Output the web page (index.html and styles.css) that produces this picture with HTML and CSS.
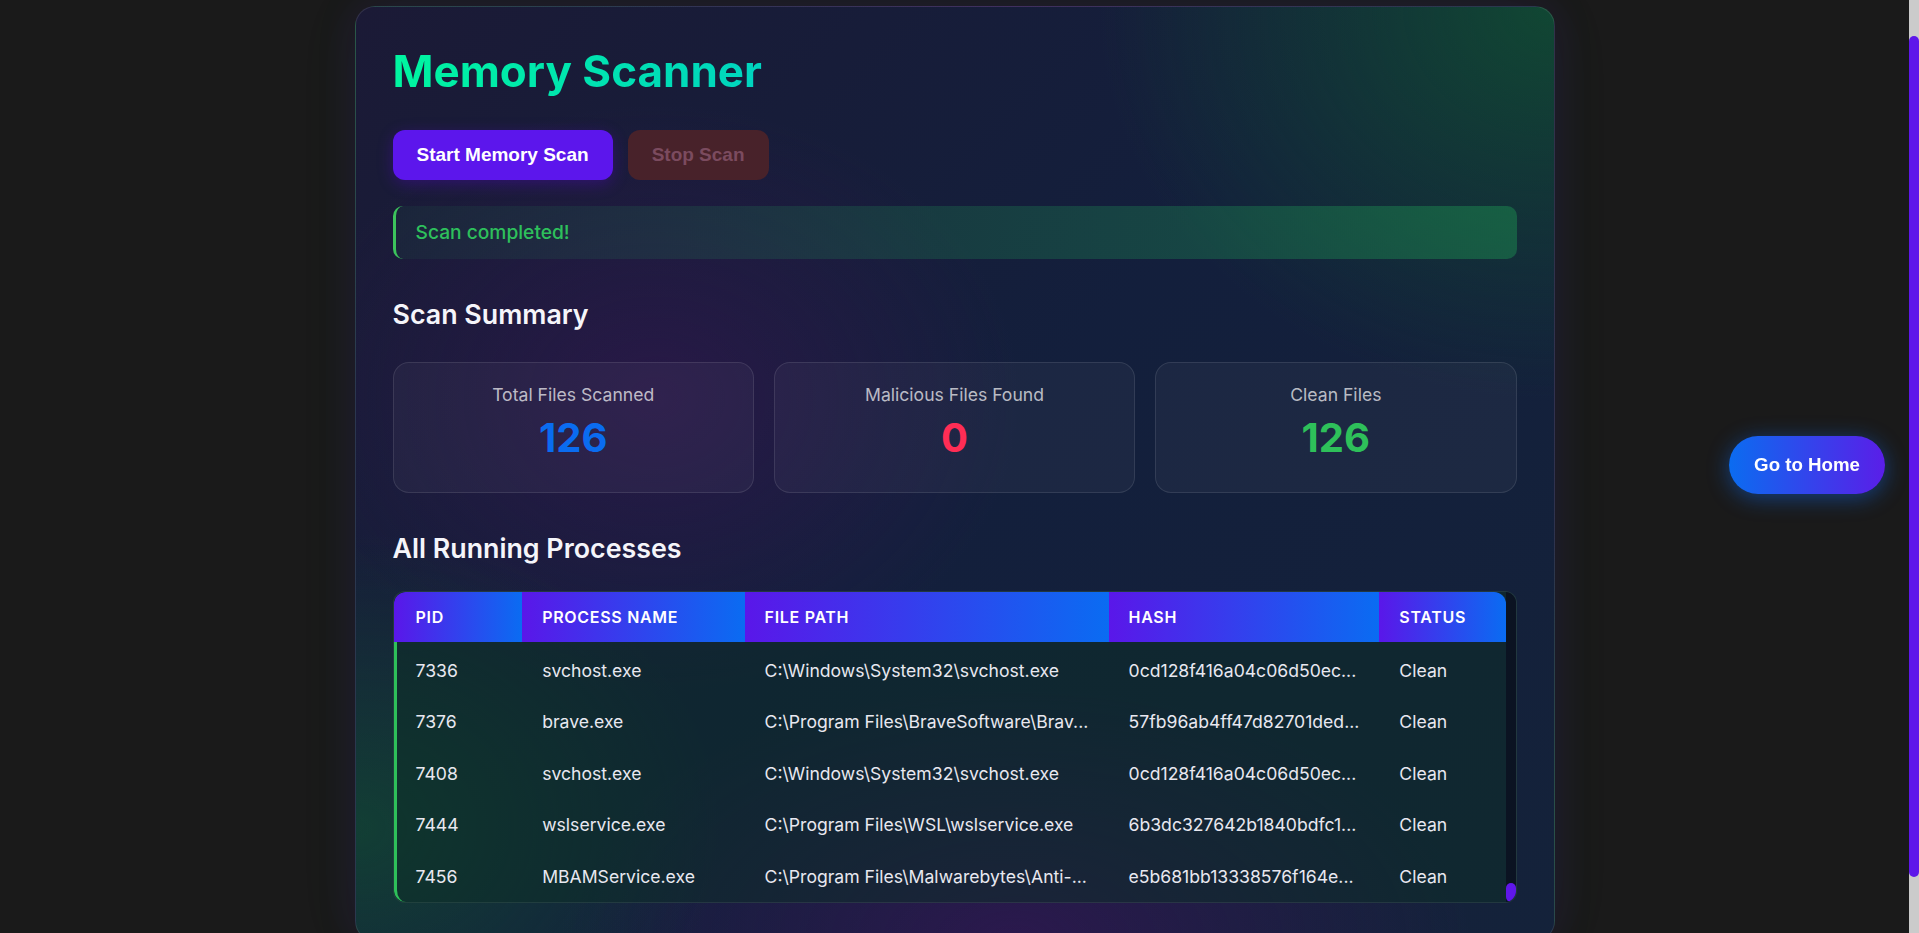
FILE: index.html
```html
<!DOCTYPE html>
<html lang="en">
<head>
<meta charset="utf-8">
<title>Memory Scanner</title>
<link rel="stylesheet" href="styles.css">
</head>
<body>
<main class="page">
  <section class="scanner">
    <h1 class="title">Memory Scanner</h1>
    <div class="actions">
      <button class="btn btn-start" type="button">Start Memory Scan</button>
      <button class="btn btn-stop" type="button" disabled>Stop Scan</button>
    </div>
    <div class="alert">Scan completed!</div>

    <h2 class="section-title">Scan Summary</h2>
    <div class="stats">
      <div class="stat">
        <div class="stat-label">Total Files Scanned</div>
        <div class="stat-value total">126</div>
      </div>
      <div class="stat">
        <div class="stat-label">Malicious Files Found</div>
        <div class="stat-value bad">0</div>
      </div>
      <div class="stat">
        <div class="stat-label">Clean Files</div>
        <div class="stat-value good">126</div>
      </div>
    </div>

    <h2 class="section-title">All Running Processes</h2>
    <div class="table-wrap">
      <table class="proc-table">
        <colgroup>
          <col class="c-pid">
          <col class="c-name">
          <col class="c-path">
          <col class="c-hash">
          <col class="c-status">
        </colgroup>
        <thead>
          <tr><th>PID</th><th>Process Name</th><th>File Path</th><th>Hash</th><th>Status</th></tr>
        </thead>
        <tbody>
          <tr><td>7336</td><td>svchost.exe</td><td>C:\Windows\System32\svchost.exe</td><td>0cd128f416a04c06d50ec...</td><td>Clean</td></tr>
          <tr><td>7376</td><td>brave.exe</td><td>C:\Program Files\BraveSoftware\Brav...</td><td>57fb96ab4ff47d82701ded...</td><td>Clean</td></tr>
          <tr><td>7408</td><td>svchost.exe</td><td>C:\Windows\System32\svchost.exe</td><td>0cd128f416a04c06d50ec...</td><td>Clean</td></tr>
          <tr><td>7444</td><td>wslservice.exe</td><td>C:\Program Files\WSL\wslservice.exe</td><td>6b3dc327642b1840bdfc1...</td><td>Clean</td></tr>
          <tr><td>7456</td><td>MBAMService.exe</td><td>C:\Program Files\Malwarebytes\Anti-...</td><td>e5b681bb13338576f164e...</td><td>Clean</td></tr>
        </tbody>
      </table>
      <div class="vscroll"><div class="vthumb"></div></div>
    </div>
  </section>
</main>
<button class="home-btn" type="button">Go to Home</button>
<div class="page-scrollbar"><div class="page-scrollbar-thumb"></div></div>
</body>
</html>
```

FILE: styles.css
```css
* { box-sizing: border-box; }

html { background: #1a1a1a; }

body {
  margin: 0;
  padding-right: 10px;
  background: #1a1a1a;
  color: #f2f2f7;
  font-family: Inter, "Noto Sans", sans-serif;
}

.page { padding: 6px 0 53px; }

.scanner {
  width: 1200px;
  margin: 0 auto;
  padding: 37px;
  border: 1px solid rgba(255, 255, 255, 0.1);
  border-radius: 20px;
  background:
    radial-gradient(ellipse 650px 560px at 100% 0%, rgba(16, 84, 48, 0.75), transparent 70%),
    radial-gradient(ellipse 520px 420px at 0% 88%, rgba(16, 84, 48, 0.6), transparent 70%),
    radial-gradient(ellipse 520px 420px at 25% 42%, rgba(58, 20, 84, 0.5), transparent 70%),
    radial-gradient(ellipse 650px 360px at 55% 100%, rgba(62, 18, 92, 0.55), transparent 70%),
    linear-gradient(135deg, #1b1a36 0%, #131f3c 50%, #14223a 100%);
  box-shadow: 0 0 40px rgba(98, 0, 234, 0.12), 0 0 70px rgba(0, 200, 100, 0.05);
}

.title {
  margin: 0 0 31px;
  font-size: 44px;
  line-height: 55.2px;
  font-weight: 700;
  background: linear-gradient(90deg, #00f5a0, #0090ff);
  -webkit-background-clip: text;
  background-clip: text;
  color: transparent;
}

.actions {
  display: flex;
  gap: 15px;
  margin-bottom: 26px;
}

.btn {
  font-family: "Liberation Sans", Arial, sans-serif;
  font-size: 19px;
  font-weight: 700;
  line-height: 22px;
  padding: 14px 24px;
  border: none;
  border-radius: 12px;
  cursor: pointer;
}

.btn-start {
  background: #5c16ec;
  color: #ffffff;
  box-shadow: 0 4px 16px rgba(98, 0, 234, 0.3);
}

.btn-stop {
  background: #48222a;
  color: #7b4b5f;
  cursor: not-allowed;
}

.alert {
  padding: 14px 20px;
  font-size: 19.2px;
  line-height: 25px;
  font-weight: 500;
  color: #2ec05c;
  border-left: 3px solid #3cc45c;
  border-radius: 10px;
  background: linear-gradient(90deg, rgba(34, 197, 94, 0.06), rgba(34, 197, 94, 0.3));
}

.section-title {
  margin: 38.5px 0 26px;
  font-size: 26.8px;
  line-height: 33.6px;
  font-weight: 600;
  color: #f5f5fa;
}

.stats {
  display: grid;
  grid-template-columns: repeat(3, 1fr);
  gap: 20px;
  margin-top: 31px;
}

.stat {
  padding: 20px 20px 30px;
  text-align: center;
  border: 1px solid rgba(255, 255, 255, 0.1);
  border-radius: 16px;
  background: rgba(255, 255, 255, 0.04);
}

.stat-label {
  font-size: 17.6px;
  line-height: 24px;
  color: rgba(255, 255, 255, 0.7);
  margin-bottom: 7px;
}

.stat-value {
  font-size: 40px;
  line-height: 48px;
  font-weight: 700;
}

.stat-value.total { color: #0a6cf0; }
.stat-value.bad { color: #ff2d55; }
.stat-value.good { color: #2ec05a; }

.table-wrap {
  display: flex;
  border: 1px solid rgba(255, 255, 255, 0.08);
  border-radius: 12px;
  overflow: hidden;
  background: rgba(12, 45, 38, 0.5);
}

.proc-table {
  flex: 1;
  min-width: 0;
  table-layout: fixed;
  border-collapse: separate;
  border-spacing: 0;
}

.c-pid { width: 129.5px; }
.c-name { width: 223px; }
.c-path { width: 364px; }
.c-hash { width: 269px; }
.c-status { width: 126.5px; }

.proc-table th {
  padding: 13px 20px;
  font-size: 16px;
  line-height: 24px;
  font-weight: 600;
  letter-spacing: 0.7px;
  text-transform: uppercase;
  text-align: left;
  color: #ffffff;
  background: linear-gradient(90deg, #5a17e9, #0a6cf2);
}

.proc-table th:first-child { border-top-left-radius: 12px; padding-left: 22px; }
.proc-table th:last-child { border-top-right-radius: 12px; }

.proc-table td {
  padding: 14px 20px;
  font-size: 17.6px;
  line-height: 23.5px;
  color: #e8e8f0;
  white-space: nowrap;
  overflow: hidden;
}

.proc-table tbody tr:first-child td { padding-top: 16.5px; }

.proc-table td:first-child {
  border-left: 3px solid #2ec05a;
  padding-left: 19px;
}

.proc-table tbody tr:last-child td:first-child { border-bottom-left-radius: 12px; }

.vscroll {
  width: 10px;
  display: flex;
  flex-direction: column;
  justify-content: flex-end;
  background: #0b1322;
}

.vthumb {
  height: 19px;
  border-radius: 5px;
  background: #5f17ea;
}

.home-btn {
  position: fixed;
  right: 34px;
  top: calc(50% - 31px);
  padding: 18px 25px;
  font-family: "Liberation Sans", Arial, sans-serif;
  font-size: 18.7px;
  font-weight: 700;
  line-height: 22px;
  color: #ffffff;
  border: none;
  border-radius: 30px;
  background: linear-gradient(90deg, #0b6cf0, #5a1ee8);
  box-shadow: 0 4px 22px rgba(13, 110, 253, 0.45);
  cursor: pointer;
}

.page-scrollbar {
  position: fixed;
  top: 0;
  right: 0;
  bottom: 0;
  width: 10px;
  padding-top: 36px;
  background: #cbcbcb;
}

.page-scrollbar-thumb {
  height: 841px;
  border-radius: 5px;
  background: #5e17ea;
}
```
